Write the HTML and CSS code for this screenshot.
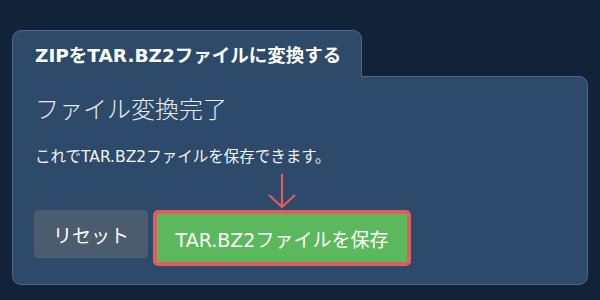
FILE: index.html
```html
<!DOCTYPE html>
<html lang="ja">
<head>
    <meta charset="UTF-8">
    <title>ZIPをTAR.BZ2ファイルに変換する</title>
    <link rel="stylesheet" href="styles.css">
</head>
<body>
    <div class="converter">
        <div class="tab">ZIPをTAR.BZ2ファイルに変換する</div>
        <div class="panel">
            <h2 class="done-title">ファイル変換完了</h2>
            <p class="done-text">これでTAR.BZ2ファイルを保存できます。</p>
            <div class="actions">
                <button class="btn btn-reset">リセット</button>
                <div class="save-wrap">
                    <svg class="arrow" width="30" height="36" viewBox="0 0 30 36">
                        <path d="M15 1 V34 M2 22 L15 34 L28 22" fill="none" stroke="#dc5f5b" stroke-width="2.2"/>
                    </svg>
                    <button class="btn btn-save">TAR.BZ2ファイルを保存</button>
                </div>
            </div>
        </div>
    </div>
</body>
</html>
```

FILE: styles.css
```css
body{
    margin:0;
    background:#112239;
    font-family:"DejaVu Sans", "Noto Sans CJK JP", sans-serif;
    color:#f2f5f8;
}
.converter{
    padding:30px 12px 0 12px;
    width:576px;
}
.tab{
    position:relative;
    z-index:1;
    display:inline-block;
    box-sizing:border-box;
    width:350px;
    height:47px;
    margin-bottom:-1px;
    padding:12px 0 0 22px;
    background:#2d4a6a;
    border:1px solid #4d6887;
    border-bottom:none;
    border-radius:9px 9px 0 0;
    font-size:18.5px;
    font-weight:700;
    line-height:26px;
    color:#ffffff;
}
.panel{
    height:209px;
    box-sizing:border-box;
    padding:18px 22px 0 22px;
    background:#2d4a6a;
    border:1px solid #4d6887;
    border-radius:0 9px 9px 9px;
}
.done-title{
    margin:0;
    font-size:24px;
    font-weight:300;
    line-height:30px;
    color:#e6ebf1;
}
.done-text{
    margin:22px 0 0 0;
    font-size:15.5px;
    line-height:20px;
}
.actions{
    display:flex;
    align-items:flex-start;
    margin-top:43px;
    margin-left:-1px;
}
.btn{
    height:48px;
    padding:0;
    border:none;
    border-radius:4px;
    font-family:"DejaVu Sans", "Noto Sans CJK JP", sans-serif;
    font-size:19px;
    color:#ffffff;
}
.btn-reset{
    width:114px;
    background:#4c5c6f;
}
.save-wrap{
    position:relative;
    margin-left:5px;
    border:4px solid #dc5f5b;
    border-radius:5px;
}
.btn-save{
    display:block;
    width:250px;
    border-radius:0;
    background:#5cb85c;
}
.arrow{
    position:absolute;
    left:50%;
    bottom:100%;
    margin-left:-15px;
    margin-bottom:5px;
}
```
